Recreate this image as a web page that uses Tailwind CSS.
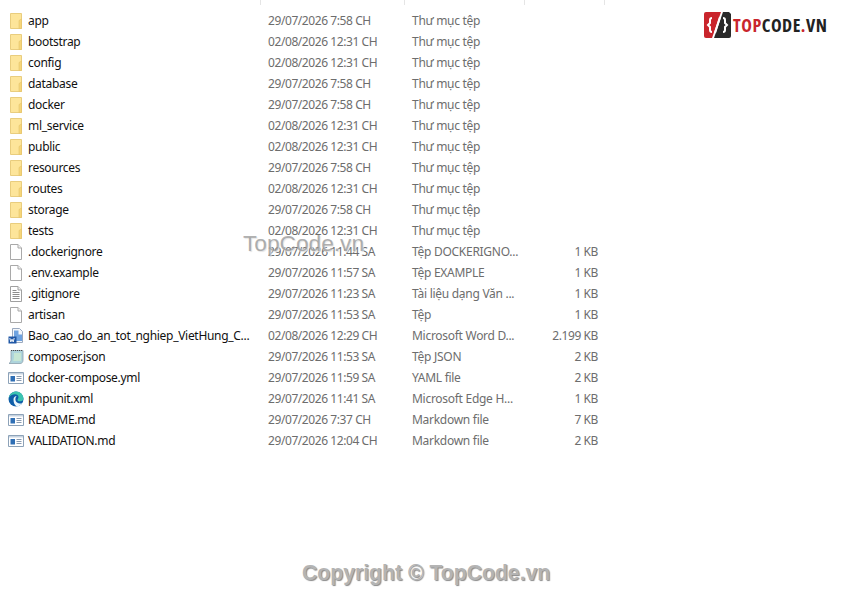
<!DOCTYPE html>
<html lang="en">
  <head>
    <meta charset="UTF-8" />
    <title>File list</title>
    <script src="https://cdn.jsdelivr.net/npm/@tailwindcss/browser@4"></script>
  </head>
  <body>
    <div class="relative w-[851px] h-[603px] overflow-hidden bg-white font-['Noto_Sans',sans-serif] text-[12px]">
      <!-- column header dividers -->
      <div class="flex h-[10px] items-start">
        <div class="w-[261px] h-[5px] border-r border-[#e5e5e5]"></div>
        <div class="w-[144px] h-[5px] border-r border-[#e5e5e5]"></div>
        <div class="w-[120px] h-[5px] border-r border-[#e5e5e5]"></div>
        <div class="w-[80px] h-[5px] border-r border-[#e5e5e5]"></div>
      </div>

      <div id="rows" class="flex flex-col"></div>

      <svg class="hidden">
        <symbol id="folder" viewBox="0 0 16 16">
          <path d="M2.500 0.500h11v15h-11z" fill="#fde59a" stroke="#e9cd7e" />
          <path d="M11 7.500l2.500-1.500v9.500H11z" fill="#f6d679" stroke="#e4c26c" stroke-width="0.6" />
        </symbol>
        <symbol id="blank" viewBox="0 0 16 16">
          <path d="M2.500 0.500h7.500l3.500 3.500v11.500h-11z" fill="#fff" stroke="#a9a9a9" />
          <path d="M10 0.500v3.500h3.500" fill="#f2f2f2" stroke="#a9a9a9" />
        </symbol>
        <symbol id="text" viewBox="0 0 16 16">
          <path d="M2.500 0.500h7.500l3.500 3.500v11.500h-11z" fill="#fff" stroke="#a0a0a0" />
          <path d="M10 0.500v3.500h3.500" fill="#f2f2f2" stroke="#a0a0a0" />
          <path d="M4.500 4.500h4M4.500 6.500h7M4.500 8.500h7M4.500 10.500h7M4.500 12.500h7" stroke="#8c8c8c" fill="none" />
        </symbol>
        <symbol id="word" viewBox="0 0 16 16">
          <path d="M4.500 0.500h7l3 3v11h-10z" fill="#f4f7fb" stroke="#9aa9bf" />
          <path d="M6 2.500h4.500v4H14v6.500H6z" fill="#6fa3e0" />
          <path d="M0.500 8.500h8v7h-8z" fill="#1f56a5" />
          <path d="M1.800 10l1 4 1.200-2.800 1.200 2.800 1-4" stroke="#fff" fill="none" stroke-width="0.9" />
        </symbol>
        <symbol id="json" viewBox="0 0 16 16">
          <path d="M3 1.500h12v9.500c0 2.200-1 3.500-3 3.500H1c1.400-1 2-2.200 2-4z" fill="#aed4dc" stroke="#8ba0ac" stroke-width="0.8" />
          <path d="M6 4h7v8H5c1-1 1-3 1-8z" fill="#c6e6d4" />
          <path d="M3 1.500h12" stroke="#4a4a4a" stroke-dasharray="1 1" />
        </symbol>
        <symbol id="doc" viewBox="0 0 16 16">
          <path d="M0.500 2.500h15v11h-15z" fill="#fff" stroke="#8da2b8" />
          <path d="M1 3h14v1.500H1z" fill="#c6d3e0" />
          <path d="M2.500 6h4.500v5.500H2.500z" fill="#2f6fb5" />
          <path d="M8.500 6.500h5M8.500 8.500h5M8.500 10.500h5" stroke="#8a9bb0" />
        </symbol>
        <symbol id="edge" viewBox="0 0 16 16">
          <circle cx="8" cy="8" r="7.500" fill="#0f5ea8" />
          <path d="M0.600 7C1.600 2.800 4.800 0.500 8 0.500c4.200 0 7.500 3.200 7.500 7.300 0 1.500-1.300 2.400-3.200 2.400-1.600 0-2.800-.5-2.800-1.300 0-.9 1-1.200 1-2.900C10.500 4 8.800 3.200 7 3.200 4.200 3.200 1.800 4.600 0.600 7z" fill="#3cc4b0" />
          <path d="M5.500 8.500c0-2 1.500-3.500 3.300-3.500-1.700 1.200-2 4.800.2 6.500 1.700 1.200 3.800 1.200 5.300.4-1.300 2.300-3.500 3.500-5.500 3.500C6.500 14.500 5.500 11.500 5.500 8.500z" fill="#eaf6fb" />
        </symbol>
      </svg>

      <!-- logo -->
      <div class="absolute left-[704px] top-[12px] flex items-center gap-[2px]">
        <svg class="w-[27px] h-[26px]" viewBox="0 0 27 26">
          <path d="M2 0h15L8 26H2q-2 0-2-2V2q0-2 2-2z" fill="#c9252c" />
          <path d="M19 0h6l2 2v22q0 2-2 2H10z" fill="#2a2a2a" />
          <path d="M8 6q-2 0-2 2v3l-2 2 2 2v3q0 2 2 2" fill="none" stroke="#fff" stroke-width="2" />
          <path d="M19 6q2 0 2 2v3l2 2-2 2v3q0 2-2 2" fill="none" stroke="#fff" stroke-width="2" />
          <path d="M16 5l-5 16" stroke="#fff" stroke-width="2" />
        </svg>
        <span class="font-['Open_Sans',sans-serif] font-bold text-[18px] leading-[26px] text-[#222] tracking-[0.5px] [font-stretch:85%]"><span class="text-[#c9252c]">TOP</span>CODE<span class="text-[#c9252c]">.</span>VN</span>
      </div>

      <!-- watermarks -->
      <div class="absolute left-[243px] top-[230px] font-['Liberation_Sans',sans-serif] text-[22.7px] leading-[26px] text-[#8f8f8f]/70 [text-shadow:1px_1px_1px_#e4e4e4]">TopCode.vn</div>
      <div class="absolute left-[302px] top-[560px] font-['Liberation_Sans',sans-serif] font-bold text-[21.2px] leading-[26px] text-[#b4b4b4] [text-shadow:1px_1px_1px_#8a8a8a]">Copyright © TopCode.vn</div>
    </div>

    <script>
      const files = [
        ["folder", "app", "29/07/2026 7:58 CH", "Thư mục tệp", ""],
        ["folder", "bootstrap", "02/08/2026 12:31 CH", "Thư mục tệp", ""],
        ["folder", "config", "02/08/2026 12:31 CH", "Thư mục tệp", ""],
        ["folder", "database", "29/07/2026 7:58 CH", "Thư mục tệp", ""],
        ["folder", "docker", "29/07/2026 7:58 CH", "Thư mục tệp", ""],
        ["folder", "ml_service", "02/08/2026 12:31 CH", "Thư mục tệp", ""],
        ["folder", "public", "02/08/2026 12:31 CH", "Thư mục tệp", ""],
        ["folder", "resources", "29/07/2026 7:58 CH", "Thư mục tệp", ""],
        ["folder", "routes", "02/08/2026 12:31 CH", "Thư mục tệp", ""],
        ["folder", "storage", "29/07/2026 7:58 CH", "Thư mục tệp", ""],
        ["folder", "tests", "02/08/2026 12:31 CH", "Thư mục tệp", ""],
        ["blank", ".dockerignore", "29/07/2026 11:44 SA", "Tệp DOCKERIGNO...", "1 KB"],
        ["blank", ".env.example", "29/07/2026 11:57 SA", "Tệp EXAMPLE", "1 KB"],
        ["text", ".gitignore", "29/07/2026 11:23 SA", "Tài liệu dạng Văn ...", "1 KB"],
        ["blank", "artisan", "29/07/2026 11:53 SA", "Tệp", "1 KB"],
        ["word", "Bao_cao_do_an_tot_nghiep_VietHung_C...", "02/08/2026 12:29 CH", "Microsoft Word D...", "2.199 KB"],
        ["json", "composer.json", "29/07/2026 11:53 SA", "Tệp JSON", "2 KB"],
        ["doc", "docker-compose.yml", "29/07/2026 11:59 SA", "YAML file", "2 KB"],
        ["edge", "phpunit.xml", "29/07/2026 11:41 SA", "Microsoft Edge H...", "1 KB"],
        ["doc", "README.md", "29/07/2026 7:37 CH", "Markdown file", "7 KB"],
        ["doc", "VALIDATION.md", "29/07/2026 12:04 CH", "Markdown file", "2 KB"],
      ];

      document.getElementById("rows").innerHTML = files
        .map(
          ([icon, name, date, type, size]) => `
        <div class="flex items-center h-[21px] whitespace-nowrap">
          <svg class="w-[16px] h-[16px] ml-[8px] mr-[4px] shrink-0"><use href="#${icon}" /></svg>
          <div class="w-[240px] text-[#111] tracking-[-0.3px]">${name}</div>
          <div class="w-[144px] text-[#6d6d6d] tracking-[-0.42px]">${date}</div>
          <div class="w-[120px] text-[#6d6d6d] tracking-[-0.28px]">${type}</div>
          <div class="w-[66px] text-right text-[#6d6d6d] tracking-[-0.4px]">${size}</div>
        </div>`
        )
        .join("");
    </script>
  </body>
</html>
